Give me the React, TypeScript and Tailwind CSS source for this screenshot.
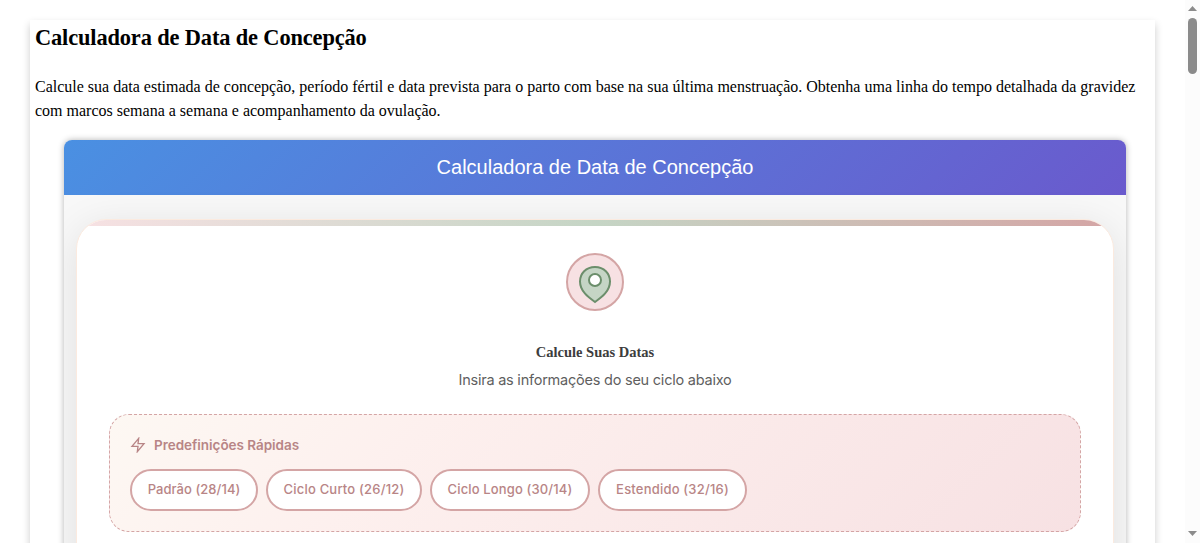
// ---------------------------------------------------------------------------
// Quick presets: cycle length / luteal phase
// ---------------------------------------------------------------------------

const PRESETS = [
  { label: 'Padrão (28/14)',      style: 'w-[128px] tracking-[0.06px]' },
  { label: 'Ciclo Curto (26/12)', style: 'w-[156px] tracking-[0.2px]' },
  { label: 'Ciclo Longo (30/14)', style: 'w-[160px] tracking-[0.14px]' },
  { label: 'Estendido (32/16)',   style: 'w-[149px] tracking-[0.2px]' },
]

function PinBadge() {
  return (
    <svg viewBox="0 0 60 60" className="w-[60px] h-[60px]" fill="none" strokeWidth={2}>
      <circle cx="30" cy="30" r="28" fill="#f7e1e3" stroke="#d4a5a5" />
      <path
        d="M30 15C21 15 15 21.5 15 29.5C15 39 23 45 30 50C37 45 45 39 45 29.5C45 21.5 39 15 30 15Z"
        fill="#c5d5c5"
        stroke="#6b8e6b"
      />
      <circle cx="30" cy="28" r="6" fill="#ffffff" stroke="#6b8e6b" />
    </svg>
  )
}

function BoltIcon() {
  return (
    <svg
      viewBox="0 0 24 24"
      className="h-4 w-4"
      fill="none"
      stroke="currentColor"
      strokeWidth={2}
    >
      <path d="M13 2L3 14h9l-1 8 10-12h-9l1-8z" />
    </svg>
  )
}

function Presets() {
  return (
    <section className="h-[118px] rounded-[20px] border border-dashed border-[#d4a5a5] bg-[linear-gradient(135deg,#fdf8f3_0%,#fdf0ee_30%,#f7e1e3_100%)] px-5 pt-[19px]">
      <h4 className="flex h-[22px] items-center gap-2 text-[13.5px] font-semibold text-[#b88586]">
        <BoltIcon />
        <span className="whitespace-nowrap tracking-[-0.03px]">Predefinições Rápidas</span>
      </h4>
      <div className="mt-[13px] flex gap-2">
        {PRESETS.map((preset) => (
          <button
            key={preset.label}
            type="button"
            className={`h-[42px] shrink-0 whitespace-nowrap rounded-[25px] border-2 border-[#d4a5a5] bg-white text-[13px] font-medium text-[#b88586] ${preset.style}`}
          >
            {preset.label}
          </button>
        ))}
      </div>
    </section>
  )
}

function CalculatorCard() {
  return (
    <div className="h-[700px] overflow-hidden rounded-[30px] border border-[#fbeadf] bg-white shadow-[0_8px_40px_rgba(0,0,0,0.1)]">
      <div className="h-[6px] bg-[linear-gradient(90deg,#f7e1e3,#c5d5c5,#d4a5a5)]" />
      <div className="px-8 pt-[26px] font-[Inter,sans-serif]">
        <div className="flex flex-col items-center">
          <PinBadge />
          <h3 className="mt-[28px] h-6 whitespace-nowrap font-['Liberation_Serif',serif] text-[14.5px] leading-6 font-bold text-[#3d3d3d]">
            Calcule Suas Datas
          </h3>
          <p className="mt-1 h-6 whitespace-nowrap text-[14.5px] leading-6 tracking-[-0.23px] text-[#5f5f5f]">
            Insira as informações do seu ciclo abaixo
          </p>
        </div>
        <div className="mt-[22px]">
          <Presets />
        </div>
      </div>
    </div>
  )
}

function Scrollbar() {
  return (
    <div className="flex w-[15px] shrink-0 flex-col items-center bg-[#fcfcfc]">
      <svg viewBox="0 0 15 18" className="h-[18px] w-[15px]" fill="#8b8b8b">
        <path d="M3 11L7.5 6L12 11Z" />
      </svg>
      <div className="h-14 w-[9px] rounded-full bg-[#8b8b8b]" />
      <svg viewBox="0 0 15 18" className="mt-auto h-[18px] w-[15px]" fill="#8b8b8b">
        <path d="M3 6L7.5 11L12 6Z" />
      </svg>
    </div>
  )
}

export default function App() {
  return (
    <div className="flex h-[543px] w-[1200px] overflow-hidden bg-white">
      <div className="min-w-0 flex-1 overflow-hidden pt-5 pr-[30px] pl-[30px]">
        <main className="h-[900px] bg-white px-[5px] font-['Liberation_Serif',serif] text-black shadow-[0_4px_8px_rgba(0,0,0,0.2)]">
          <h1 className="pt-1 text-[22.4px] leading-7 font-bold tracking-[-0.13px] whitespace-nowrap">
            Calculadora de Data de Concepção
          </h1>
          <p className="mt-[23px] text-base leading-6">
            Calcule sua data estimada de concepção, período fértil e data prevista para o parto com base na sua última menstruação. Obtenha uma linha do tempo detalhada da gravidez com marcos semana a semana e acompanhamento da ovulação.
          </p>
          <div className="mx-[29px] mt-[17px] h-[740px] w-[1062px] overflow-hidden rounded-t-lg bg-[#f8f8f8] shadow-[0_0_6px_rgba(0,0,0,0.3)]">
            <h2 className="flex h-[55px] items-center justify-center bg-[linear-gradient(135deg,#4a90e2,#6a5acd)] pb-0.5 font-['Liberation_Sans',sans-serif] text-xl text-white">
              Calculadora de Data de Concepção
            </h2>
            <div className="px-[12px] pt-[24px]">
              <CalculatorCard />
            </div>
          </div>
        </main>
      </div>
      <Scrollbar />
    </div>
  )
}
